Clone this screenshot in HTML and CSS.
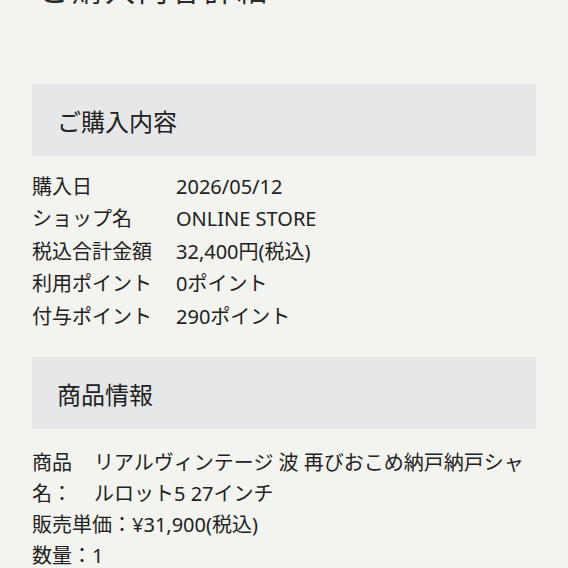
FILE: index.html
```html
<!DOCTYPE html>
<html lang="ja">
<head>
<meta charset="utf-8">
<link rel="stylesheet" href="styles.css">
</head>
<body>
<div class="page">
  <h1 class="title">ご購入内容詳細</h1>
  <div class="section-head first">ご購入内容</div>
  <dl class="info">
    <dt>購入日</dt><dd>2026/05/12</dd>
    <dt>ショップ名</dt><dd>ONLINE STORE</dd>
    <dt>税込合計金額</dt><dd>32,400円(税込)</dd>
    <dt>利用ポイント</dt><dd>0ポイント</dd>
    <dt>付与ポイント</dt><dd>290ポイント</dd>
  </dl>
  <div class="section-head">商品情報</div>
  <div class="product">
    <div class="pname">
      <div class="plabel">商品名：</div>
      <div class="pvalue">リアルヴィンテージ 波 再びおこめ納戸納戸シャルロット5 27インチ</div>
    </div>
    <div class="pline">販売単価：¥31,900(税込)</div>
    <div class="pline">数量：1</div>
  </div>
</div>
</body>
</html>
```
FILE: styles.css
```css
html, body {
  margin: 0;
  padding: 0;
  background: #f3f3ef;
}
body {
  color: #222;
  font-family: "Noto Sans", "Noto Sans CJK JP", sans-serif;
  overflow: hidden;
}
.page {
  padding: 0 32px;
}
.title {
  margin: -30px 0 0 7px;
  font-size: 30px;
  font-weight: 400;
  letter-spacing: 3px;
  line-height: 40px;
  color: #2a2a2a;
}
.section-head {
  background: #e6e7e8;
  height: 72px;
  display: flex;
  align-items: center;
  padding-left: 25px;
  font-size: 24px;
  color: #222;
  margin-top: 24px;
}
.section-head.first {
  margin-top: 74px;
}
.info {
  display: grid;
  grid-template-columns: 144px 1fr;
  margin: 15px 0 0 0;
  font-size: 20px;
  line-height: 32.4px;
}
.info dt, .info dd {
  margin: 0;
  white-space: nowrap;
}
.product {
  margin-top: 18px;
  font-size: 20px;
  line-height: 31px;
}
.pname {
  display: grid;
  grid-template-columns: 44px 1fr;
  column-gap: 18px;
}
.pline {
  margin-top: 0;
}
```
